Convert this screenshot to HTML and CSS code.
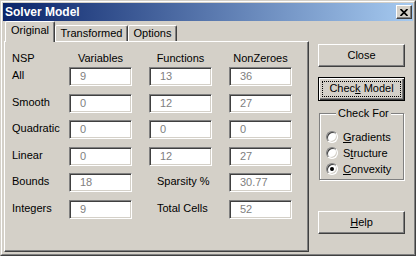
FILE: index.html
```html
<!DOCTYPE html>
<html>
<head lang="en">
  <meta charset="UTF-8">
  <title>Solver Model</title>
  <link rel="stylesheet" href="styles.css">
</head>
<body>
<div class="window">
  <div class="frame">
    <div class="titlebar">
      <span class="title">Solver Model</span>
      <span class="tb-close">
        <svg width="8" height="7" viewBox="0 0 8 7">
          <path d="M0.5 0 L7.5 7 M7.5 0 L0.5 7" stroke="#000" stroke-width="1.7"/>
        </svg>
      </span>
    </div>
    <div class="body">
      <!--左侧：选项卡和统计数据-->
      <div class="tabctl">
        <div class="tabs">
          <div class="tab active">Original</div>
          <div class="tab">Transformed</div>
          <div class="tab">Options</div>
        </div>
        <div class="panel">
          <div class="grid head">
            <span>NSP</span>
            <span class="c">Variables</span>
            <span class="c">Functions</span>
            <span class="c">NonZeroes</span>
          </div>
          <div class="grid rows">
            <span class="lbl">All</span>
            <div class="field">9</div>
            <div class="field">13</div>
            <div class="field">36</div>

            <span class="lbl">Smooth</span>
            <div class="field">0</div>
            <div class="field">12</div>
            <div class="field">27</div>

            <span class="lbl">Quadratic</span>
            <div class="field">0</div>
            <div class="field">0</div>
            <div class="field">0</div>

            <span class="lbl">Linear</span>
            <div class="field">0</div>
            <div class="field">12</div>
            <div class="field">27</div>

            <span class="lbl">Bounds</span>
            <div class="field">18</div>
            <span class="lbl sub">Sparsity %</span>
            <div class="field">30.77</div>

            <span class="lbl">Integers</span>
            <div class="field">9</div>
            <span class="lbl sub">Total Cells</span>
            <div class="field">52</div>
          </div>
        </div>
      </div>
      <!--右侧：按钮-->
      <div class="side">
        <div class="btn close">Close</div>
        <div class="btn default">Chec<u>k</u> Model</div>
        <fieldset class="group">
          <legend>Check For</legend>
          <div class="radio"><span class="dot"></span><span><u>G</u>radients</span></div>
          <div class="radio"><span class="dot"></span><span>S<u>t</u>ructure</span></div>
          <div class="radio"><span class="dot on"></span><span><u>C</u>onvexity</span></div>
        </fieldset>
        <div class="btn help"><u>H</u>elp</div>
      </div>
    </div>
  </div>
</div>
</body>
</html>
```
FILE: styles.css
```css
* {
  margin: 0;
  padding: 0;
  box-sizing: border-box;
}

body {
  font-family: "Liberation Sans", Arial, sans-serif;
  font-size: 11px;
  color: #000;
  background-color: #d4d0c8;
}

.window {
  width: 416px;
  height: 256px;
  border: 1px solid;
  border-color: #d4d0c8 #404040 #404040 #d4d0c8;
}

.frame {
  height: 100%;
  border: 1px solid;
  border-color: #fff #808080 #808080 #fff;
  padding: 1px;
  display: flex;
  flex-direction: column;
}

/*标题栏*/
.titlebar {
  height: 18px;
  display: flex;
  align-items: center;
  justify-content: space-between;
  padding: 0 1px 0 2px;
  background: linear-gradient(to right, #0a246a, #a6caf0);
}

.title {
  color: #fff;
  font-weight: bold;
  font-size: 12px;
}

.tb-close {
  width: 16px;
  height: 14px;
  display: flex;
  align-items: center;
  justify-content: center;
  background-color: #d4d0c8;
  border: 1px solid;
  border-color: #fff #404040 #404040 #fff;
  box-shadow: inset -1px -1px #808080;
}

.body {
  flex: 1;
  display: flex;
  gap: 9px;
  padding: 0 7px 1px 1px;
}

.tabctl {
  width: 305px;
  display: flex;
  flex-direction: column;
}

.tabs {
  height: 20px;
  display: flex;
  align-items: flex-end;
  padding-left: 1px;
}

.tab {
  height: 16px;
  line-height: 14px;
  text-align: center;
  border: 1px solid;
  border-bottom: none;
  border-color: #fff #404040 transparent #fff;
  border-radius: 2px 2px 0 0;
  box-shadow: inset -1px 0 #808080;
  background-color: #d4d0c8;
}

.tab:nth-child(1) {
  width: 50px;
}

.tab:nth-child(2) {
  width: 73px;
}

.tab:nth-child(3) {
  width: 49px;
}

.tab.active {
  height: 21px;
  line-height: 17px;
  margin-bottom: -1px;
  position: relative;
  z-index: 1;
}

.panel {
  flex: 1;
  border: 1px solid;
  border-color: #fff #404040 #404040 #fff;
  box-shadow: inset -1px -1px #808080;
  padding: 10px 0 0 7px;
}

/*第一列文字较宽，允许溢出到列间距中*/
.grid {
  display: grid;
  grid-template-columns: 40px 63px 63px 63px;
  column-gap: 17px;
  white-space: nowrap;
}

.head {
  line-height: 13px;
  margin-bottom: 2px;
}

.head .c {
  text-align: center;
}

.rows {
  grid-auto-rows: 19px;
  row-gap: 7.6px;
}

.lbl {
  line-height: 17px;
}

.lbl.sub {
  padding-left: 8px;
}

.field {
  height: 19px;
  line-height: 17px;
  padding-left: 10px;
  color: #808080;
  background-color: #fff;
  border: 1px solid;
  border-color: #808080 #fff #fff #808080;
  box-shadow: inset 1px 1px #404040, inset -1px -1px #d4d0c8;
}

/*右侧按钮*/
.side {
  width: 87px;
  display: flex;
  flex-direction: column;
}

.btn {
  height: 23px;
  line-height: 21px;
  text-align: center;
  border: 1px solid;
  border-color: #fff #404040 #404040 #fff;
  box-shadow: inset -1px -1px #808080;
}

.btn.close {
  margin-top: 23px;
}

.btn.default {
  height: 24px;
  margin-top: 10px;
  border-color: #000;
  box-shadow: inset 1px 1px #fff, inset -1px -1px #404040, inset -2px -2px #808080;
  position: relative;
}

.btn.default::after {
  content: "";
  position: absolute;
  left: 3px;
  top: 3px;
  right: 3px;
  bottom: 3px;
  border: 1px dotted #000;
}

.group {
  margin: 6px 1px 0;
  height: 73px;
  border: 1px solid #808080;
  box-shadow: inset 1px 1px #fff, 1px 1px #fff;
  padding: 9px 0 0 6px;
}

.group legend {
  margin-left: 10px;
  padding: 0 2px;
  line-height: 13px;
  background-color: #d4d0c8;
}

.radio {
  height: 16px;
  display: flex;
  align-items: center;
  gap: 5px;
}

.dot {
  width: 12px;
  height: 12px;
  border-radius: 50%;
  background-color: #fff;
  border: 1px solid;
  border-color: #808080 #fff #fff #808080;
  box-shadow: inset 1px 1px #404040, inset -1px -1px #d4d0c8;
  display: flex;
  align-items: center;
  justify-content: center;
}

.dot.on::before {
  content: "";
  width: 4px;
  height: 4px;
  border-radius: 50%;
  background-color: #000;
}

.btn.help {
  margin-top: 31px;
}
```
